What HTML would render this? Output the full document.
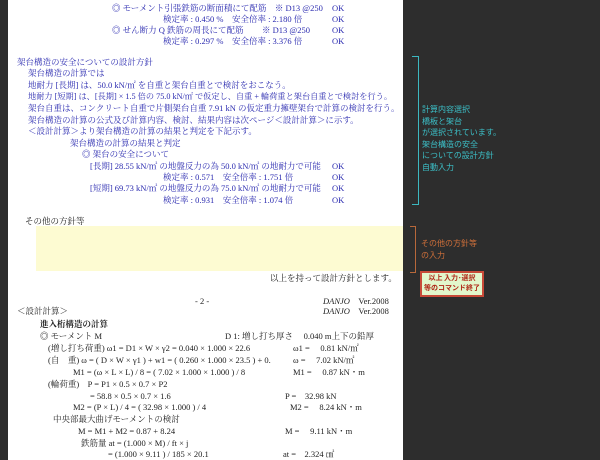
<!DOCTYPE html>
<html><head><meta charset="utf-8"><style>
body{margin:0;width:600px;height:460px;background:#2d2d2d;overflow:hidden;position:relative;font-family:"Liberation Serif","Noto Serif CJK SC","Noto Sans CJK JP",serif;}
#pg{position:absolute;left:8px;top:0;width:395px;height:460px;background:#fff;}
.t{position:absolute;white-space:pre;font-size:8.5px;line-height:10px;color:#2b2bb0;}
.k{color:#222;}
.s{font-family:"Liberation Sans","Noto Sans CJK JP",sans-serif;font-size:8px;line-height:11.5px;position:absolute;white-space:pre;}
</style></head><body>
<div id="pg"></div>
<div style="position:absolute;left:36px;top:226px;width:367px;height:45px;background:#fdfbd2"></div>

<div class="t" style="left:112px;top:3px">◎ モーメント引張鉄筋の断面積にて配筋　※ D13 @250</div>
<div class="t" style="left:163px;top:14px">検定率 : 0.450 %　安全倍率 : 2.180 倍</div>
<div class="t" style="left:112px;top:25px">◎ せん断力 Q 鉄筋の周長にて配筋</div>
<div class="t" style="left:262px;top:25px">※ D13 @250</div>
<div class="t" style="left:163px;top:36px">検定率 : 0.297 %　安全倍率 : 3.376 倍</div>
<div class="t" style="left:332px;top:3px">OK</div>
<div class="t" style="left:332px;top:14px">OK</div>
<div class="t" style="left:332px;top:25px">OK</div>
<div class="t" style="left:332px;top:36px">OK</div>

<div class="t" style="left:17px;top:57px">架台構造の安全についての設計方針</div>
<div class="t" style="left:28px;top:68px">架台構造の計算では</div>
<div class="t" style="left:28px;top:80px">地耐力 [長期] は、50.0 kN/㎡ を自重と架台自重とで検討をおこなう。</div>
<div class="t" style="left:28px;top:92px;font-size:8.2px">地耐力 [短期] は、[長期] × 1.5 倍の 75.0 kN/㎡ で仮定し、自重 + 輪荷重と架台自重とで検討を行う。</div>
<div class="t" style="left:28px;top:103px">架台自重は、コンクリート自重で片側架台自重 7.91 kN の仮定重力擁壁架台で計算の検討を行う。</div>
<div class="t" style="left:28px;top:115px">架台構造の計算の公式及び計算内容、検討、結果内容は次ページ＜設計計算＞に示す。</div>
<div class="t" style="left:28px;top:126px">＜設計計算＞より架台構造の計算の結果と判定を下記示す。</div>
<div class="t" style="left:70px;top:138px">架台構造の計算の結果と判定</div>
<div class="t" style="left:82px;top:149px">◎ 架台の安全について</div>
<div class="t" style="left:90px;top:161px">[長期] 28.55 kN/㎡ の地盤反力の為 50.0 kN/㎡ の地耐力で可能</div>
<div class="t" style="left:163px;top:172px">検定率 : 0.571　安全倍率 : 1.751 倍</div>
<div class="t" style="left:90px;top:183px">[短期] 69.73 kN/㎡ の地盤反力の為 75.0 kN/㎡ の地耐力で可能</div>
<div class="t" style="left:163px;top:195px">検定率 : 0.931　安全倍率 : 1.074 倍</div>
<div class="t" style="left:332px;top:161px">OK</div>
<div class="t" style="left:332px;top:172px">OK</div>
<div class="t" style="left:332px;top:183px">OK</div>
<div class="t" style="left:332px;top:195px">OK</div>

<div class="t k" style="left:25px;top:216px">その他の方針等</div>
<div class="t k" style="left:270px;top:273px">以上を持って設計方針とします。</div>
<div class="t k" style="left:195px;top:296px">- 2 -</div>
<div class="t k" style="left:323px;top:296px"><i>DANJO</i>　Ver.2008</div>
<div class="t k" style="left:17px;top:306px">＜設計計算＞</div>
<div class="t k" style="left:323px;top:306px"><i>DANJO</i>　Ver.2008</div>

<div class="t k" style="left:40px;top:319px;font-weight:bold">進入桁構造の計算</div>
<div class="t k" style="left:40px;top:331px">◎ モーメント M</div>
<div class="t k" style="left:225px;top:331px">D 1: 増し打ち厚さ　 0.040 m上下の鉛厚</div>
<div class="t k" style="left:48px;top:343px">(増し打ち荷重) ω1 = D1 × W × γ2 = 0.040 × 1.000 × 22.6</div>
<div class="t k" style="left:293px;top:343px">ω1 =　 0.81 kN/㎡</div>
<div class="t k" style="left:48px;top:355px">(自　重) ω = ( D × W × γ1 ) + w1 = ( 0.260 × 1.000 × 23.5 ) + 0.</div>
<div class="t k" style="left:293px;top:355px">ω =　 7.02 kN/㎡</div>
<div class="t k" style="left:73px;top:367px">M1 = (ω × L × L) / 8 = ( 7.02 × 1.000 × 1.000 ) / 8</div>
<div class="t k" style="left:293px;top:367px">M1 =　 0.87 kN・m</div>
<div class="t k" style="left:48px;top:379px">(輪荷重)　P = P1 × 0.5 × 0.7 × P2</div>
<div class="t k" style="left:90px;top:391px">= 58.8 × 0.5 × 0.7 × 1.6</div>
<div class="t k" style="left:285px;top:391px">P =　32.98 kN</div>
<div class="t k" style="left:73px;top:402px">M2 = (P × L) / 4 = ( 32.98 × 1.000 ) / 4</div>
<div class="t k" style="left:290px;top:402px">M2 =　 8.24 kN・m</div>
<div class="t k" style="left:53px;top:414px">中央部最大曲げモーメントの検討</div>
<div class="t k" style="left:78px;top:426px">M = M1 + M2 = 0.87 + 8.24</div>
<div class="t k" style="left:285px;top:426px">M =　 9.11 kN・m</div>
<div class="t k" style="left:81px;top:438px">鉄筋量 at = (1.000 × M) / ft × j</div>
<div class="t k" style="left:108px;top:449px">= (1.000 × 9.11 ) / 185 × 20.1</div>
<div class="t k" style="left:283px;top:449px">at =　2.324 ㎠</div>

<!-- cyan bracket -->
<div style="position:absolute;left:412px;top:56px;width:6px;height:147px;border:1px solid #3cb8c0;border-left:none"></div>
<div class="s" style="left:422px;top:104px;color:#3cc0c8">計算内容選択
橋板と架台
が選択されています。
架台構造の安全
についての設計方針
自動入力</div>
<!-- orange bracket -->
<div style="position:absolute;left:410px;top:226px;width:5px;height:45px;border:1px solid #b8683a;border-left:none"></div>
<div class="s" style="left:421px;top:238px;color:#d0703a">その他の方針等
の入力</div>
<div style="position:absolute;left:420px;top:271px;width:60px;height:22px;background:#e2f7cc;border:2px solid #c84a38;"></div>
<div style="position:absolute;left:420px;top:273px;width:64px;text-align:center;color:#b02818;font-weight:bold;font-size:7px;line-height:10px;font-family:'Noto Sans CJK JP',sans-serif;white-space:pre">以上 入力･選択
等のコマンド終了</div>
</body></html>
